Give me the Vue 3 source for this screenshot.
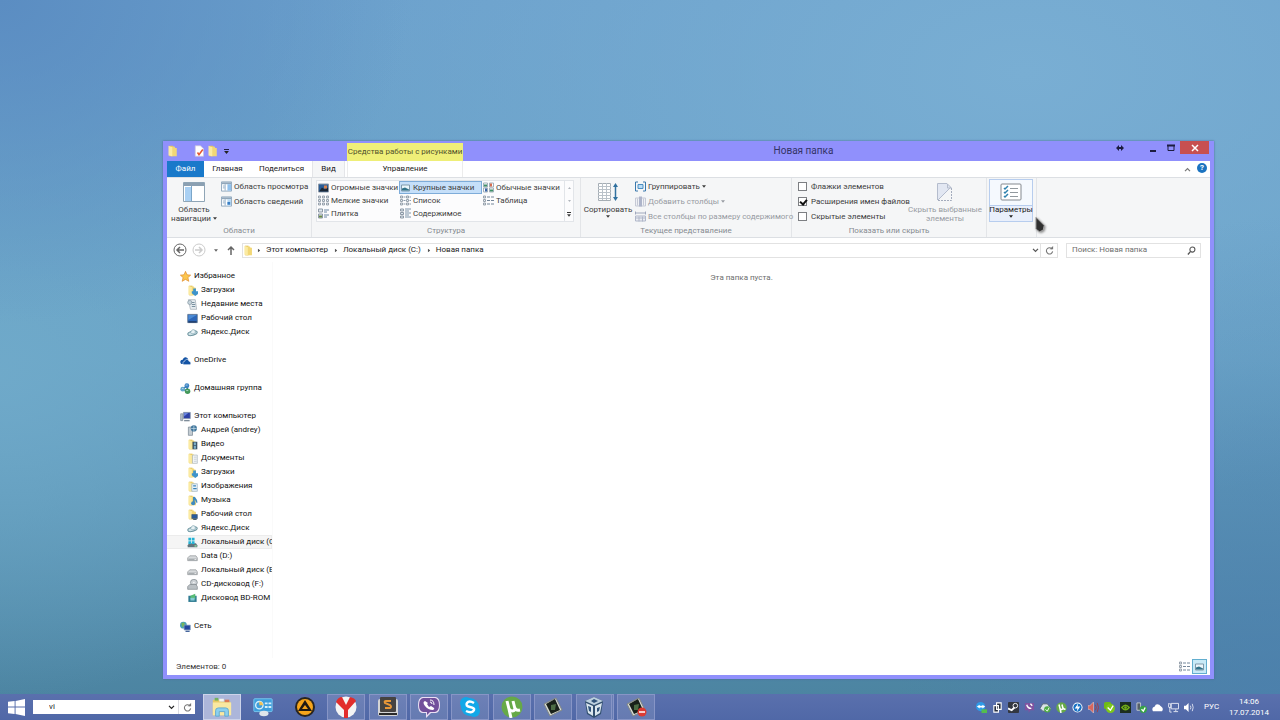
<script setup>
import { ref } from 'vue'

const views = [
  { icon: 'huge', label: 'Огромные значки' },
  { icon: 'large', label: 'Крупные значки' },
  { icon: 'medium', label: 'Обычные значки' },
  { icon: 'small', label: 'Мелкие значки' },
  { icon: 'list', label: 'Список' },
  { icon: 'table', label: 'Таблица' },
  { icon: 'tiles', label: 'Плитка' },
  { icon: 'content', label: 'Содержимое' }
]
const activeView = ref('large')

const options = ref([
  { id: 'opt-flags', label: 'Флажки элементов', on: false },
  { id: 'opt-ext', label: 'Расширения имен файлов', on: true },
  { id: 'opt-hidden', label: 'Скрытые элементы', on: false }
])

const crumbs = ['Этот компьютер', 'Локальный диск (C:)', 'Новая папка']

const tree = [
  {
    icon: 'star', label: 'Избранное', children: [
      { icon: 'f-down', label: 'Загрузки' },
      { icon: 'recent', label: 'Недавние места' },
      { icon: 'desktop', label: 'Рабочий стол' },
      { icon: 'yadisk', label: 'Яндекс.Диск' }
    ]
  },
  { icon: 'onedrive', label: 'OneDrive', children: [] },
  { icon: 'homegroup', label: 'Домашняя группа', children: [] },
  {
    icon: 'pc', label: 'Этот компьютер', children: [
      { icon: 'phone', label: 'Андрей (andrey)' },
      { icon: 'f-video', label: 'Видео' },
      { icon: 'f-doc', label: 'Документы' },
      { icon: 'f-down', label: 'Загрузки' },
      { icon: 'f-img', label: 'Изображения' },
      { icon: 'f-music', label: 'Музыка' },
      { icon: 'f-desk', label: 'Рабочий стол' },
      { icon: 'yadisk', label: 'Яндекс.Диск' },
      { icon: 'drive-c', label: 'Локальный диск (C:)', selected: true },
      { icon: 'drive', label: 'Data (D:)' },
      { icon: 'drive', label: 'Локальный диск (E:)' },
      { icon: 'cd', label: 'CD-дисковод (F:)' },
      { icon: 'bd', label: 'Дисковод BD-ROM' }
    ]
  },
  { icon: 'network', label: 'Сеть', children: [] }
]

const apps = [
  { icon: 'explorer', name: 'Проводник', state: 'active' },
  { icon: 'control', name: 'Панель управления', state: '' },
  { icon: 'aimp', name: 'AIMP', state: '' },
  { icon: 'yandex', name: 'Яндекс', state: 'open' },
  { icon: 'sublime', name: 'Sublime Text', state: 'open' },
  { icon: 'viber', name: 'Viber', state: 'open' },
  { icon: 'skype', name: 'Skype', state: 'open' },
  { icon: 'utorrent', name: 'uTorrent', state: 'open' },
  { icon: 'film', name: 'Camtasia', state: 'open' },
  { icon: 'vbox', name: 'VirtualBox', state: 'open stacked' },
  { icon: 'filmrec', name: 'Camtasia Recorder', state: 'open' }
]

const tray = ['t-team', 't-copy', 't-steam', 't-viber', 't-disk', 't-ut', 't-bolt', 't-sound', 't-green', 't-nvidia', 't-usb', 't-cloud', 't-net', 't-vol']
const query = ref('vi')
const search = ref('')
</script>

<template>
  <div class="desktop">
    <svg class="defs" aria-hidden="true">
      <symbol id="folder" viewBox="0 0 16 16"><path d="M3 1h5v14H3z" fill="#e0bd50" /><path d="M5 2h5l1 2h2v11H5z" fill="#f2d776" /><path d="M2 1l5 2v12l-5-1z" fill="#fbeaa2" /></symbol>
      <symbol id="props" viewBox="0 0 16 16"><path d="M3 1h7l4 4v10H3z" fill="#fff" stroke="#c9c3d8" /><path d="M6 10l2 3 5-7" fill="none" stroke="#e4552f" stroke-width="2" /></symbol>
      <symbol id="tri" viewBox="0 0 8 5"><path d="M0 0h8L4 5z" fill="currentColor" /></symbol>
      <symbol id="navpane" viewBox="0 0 22 20"><path d="M.5 .5h21v19H.5z" fill="#fff" stroke="#8fa5b6" /><path d="M1 1h20v3H1z" fill="#8ba0b2" /><path d="M2 5h6v14H2z" fill="#a9d0f3" /><path d="M8.500 4v15" stroke="#7ba6c9" /></symbol>
      <symbol id="preview" viewBox="0 0 12 11"><path d="M.5 .5h11v10H.5z" fill="#fff" stroke="#8aa3ba" /><path d="M1 1h10v2H1z" fill="#90a6ba" /><path d="M7 3h4v7H7z" fill="#8fc1ee" /><path d="M2 5h2M2 7h2M4.500 3v7" stroke="#8daac4" /></symbol>
      <symbol id="details" viewBox="0 0 12 11"><path d="M.5 .5h11v10H.5z" fill="#fff" stroke="#8aa3ba" /><path d="M1 1h10v2H1z" fill="#90a6ba" /><path d="M7 3h4v7H7z" fill="#b8daf5" /><path d="M7 6h3v3H7z" fill="#3a7fc4" /><path d="M2 5h2M2 7h2M4.500 3v7" stroke="#8daac4" /></symbol>
      <symbol id="huge" viewBox="0 0 11 10"><path d="M.5 1.500h10v8H.5z" fill="#2b5d96" stroke="#8c99a8" /><path d="M1 9l3-4 3 2 3-2v4z" fill="#1b2735" /><path d="M6 3h3v3H6z" fill="#d9824d" /></symbol>
      <symbol id="large" viewBox="0 0 11 10"><path d="M1.500 2.500h8v6h-8z" fill="#eaf6fb" stroke="#7f99ab" /><path d="M2 6l3-1 4 2v1H2z" fill="#317389" /></symbol>
      <symbol id="medium" viewBox="0 0 11 10"><path d="M.5 .5h4v4h-4zM6.500 .5h4v4h-4zM.5 5.500h4v4h-4zM6.500 5.500h4v4h-4z" fill="#fff" stroke="#a3b0ba" /><path d="M1 2h3v2H1zM7 7h3v2H7z" fill="#3f8f68" /><path d="M7 1h2v3H7z" fill="#d56d4e" /><path d="M2 6h2v3H2z" fill="#3b64a8" /></symbol>
      <symbol id="small" viewBox="0 0 11 10"><path d="M.5 .5h2v2h-2zM4.500 .5h2v2h-2zM8.500 .5h2v2h-2zM.5 4h2v2h-2zM4.500 4h2v2h-2zM8.500 4h2v2h-2zM.5 7.500h2v2h-2zM4.500 7.500h2v2h-2zM8.500 7.500h2v2h-2z" fill="#e8eef2" stroke="#98a2ad" /></symbol>
      <symbol id="list" viewBox="0 0 11 10"><path d="M.5 .5h2v2h-2zM6.500 .5h2v2h-2zM.5 4h2v2h-2zM6.500 4h2v2h-2zM.5 7.500h2v2h-2zM6.500 7.500h2v2h-2z" fill="#e8eef2" stroke="#98a2ad" /><path d="M3.500 1.500h2M9.500 1.500H11M3.500 5h2M9.500 5H11M3.500 8.500h2M9.500 8.500H11" stroke="#8a9aab" /></symbol>
      <symbol id="table" viewBox="0 0 11 10"><path d="M.5 .5h2v2h-2zM.5 4h2v2h-2zM.5 7.500h2v2h-2z" fill="#e8eef2" stroke="#98a2ad" /><path d="M4 1.500h3M8 1.500h3M4 5h3M8 5h3M4 8.500h3M8 8.500h3" stroke="#75879a" /></symbol>
      <symbol id="tiles" viewBox="0 0 11 10"><path d="M.5 .5h4v3h-4zM.5 5.500h4v4h-4z" fill="#dfe8ee" stroke="#8d99a6" /><path d="M1 7h3v2H1z" fill="#6a8b43" /><path d="M6 1.500h5M6 3.500h3M6 6.500h5M6 8.500h3" stroke="#6d88a4" /></symbol>
      <symbol id="content" viewBox="0 0 11 10"><path d="M.5 .5h3v2h-3zM.5 4h3v2h-3zM.5 7.500h3v2h-3z" fill="#dfe8ee" stroke="#8d99a6" /><path d="M5 .5h6M5 2.500h4M5 4.500h6M5 6.500h4M5 8.500h6" stroke="#7f95aa" /></symbol>
      <symbol id="sort" viewBox="0 0 22 20"><path d="M1.500 1.500h12v17h-12z" fill="#fff" stroke="#a5adb4" /><path d="M1 4.500h13M1 7.500h13M1 10.500h13M1 13.500h13M1 16.500h13M5.500 1v17M9.500 1v17" stroke="#bac2c9" /><path d="M18.500 3v14" stroke="#31719f" stroke-width="1.500" /><path d="M16 5l2.500-4L21 5zM16 15l2.500 4 2.500-4z" fill="#31719f" /></symbol>
      <symbol id="group" viewBox="0 0 11 10"><path d="M3 .5H.5v9H3M8 .5h2.500v9H8" fill="none" stroke="#3a79ad" /><path d="M3 3h5v4H3z" fill="#b9dcf6" stroke="#4c8fc2" /></symbol>
      <symbol id="addcol" viewBox="0 0 11 10"><path d="M.5 1.500h10v8H.5z" fill="#f0f1f5" stroke="#c5c9d5" /><path d="M4 0h3v10H4z" fill="#aeb5ca" /><path d="M2.500 2v7M8.500 2v7" stroke="#c5c9d5" /></symbol>
      <symbol id="fitcol" viewBox="0 0 11 10"><path d="M.5 0v3M10.500 0v3M1 1.500h9" stroke="#a0a8bd" /><path d="M.5 4.500h10v5H.5z" fill="#eceef4" stroke="#b0b7c9" /><path d="M1 6.500h9M4 5v5M7.500 5v5" stroke="#b0b7c9" /></symbol>
      <symbol id="hide" viewBox="0 0 18 20"><path d="M2 1.500h9l4 4L2 18z" fill="#e2e7f2" /><path d="M1.500 18V1.500h9.500l4 4" fill="none" stroke="#b4bccd" /><path d="M15.500 6v12.500h-14" fill="none" stroke="#a4acbd" stroke-dasharray="2 1" /><path d="M2 18L15 5M11.500 2v4h4" stroke="#b4bccd" fill="none" /></symbol>
      <symbol id="params" viewBox="0 0 22 18"><rect x="1" y="1" width="20" height="16" rx="1" fill="#fff" stroke="#84898f" /><path d="M4 5l1 1 3-3M4 9l1 1 3-3M4 13l1 1 3-3" fill="none" stroke="#2f82ae" stroke-width="1.500" /><path d="M10 5.500h8M10 9.500h8M10 13.500h8" stroke="#92999e" /></symbol>
      <symbol id="back" viewBox="0 0 14 14"><circle cx="7" cy="7" r="6" fill="none" stroke="currentColor" /><path d="M11 7H4M7 4L4 7l3 3" fill="none" stroke="currentColor" stroke-width="1.500" /></symbol>
      <symbol id="forward" viewBox="0 0 14 14"><circle cx="7" cy="7" r="6" fill="none" stroke="currentColor" /><path d="M3 7h7M7 4l3 3-3 3" fill="none" stroke="currentColor" stroke-width="1.500" /></symbol>
      <symbol id="up" viewBox="0 0 8 10"><path d="M4 10V2M1 5l3-3 3 3" fill="none" stroke="#666" stroke-width="1.500" /></symbol>
      <symbol id="chev" viewBox="0 0 8 6"><path d="M1 1l3 3 3-3" fill="none" stroke="currentColor" stroke-width="1.500" /></symbol>
      <symbol id="reload" viewBox="0 0 10 10"><path d="M8 3.500A3.500 3.500 0 1 0 8.500 6" fill="none" stroke="#777" stroke-width="1.200" /><path d="M5 3.500h4V0z" fill="#777" /></symbol>
      <symbol id="lens" viewBox="0 0 10 10"><circle cx="6" cy="4" r="2.800" fill="none" stroke="#555" stroke-width="1.200" /><path d="M4 6L1 9.500" stroke="#555" stroke-width="1.500" /></symbol>
      <symbol id="star" viewBox="0 0 16 16"><path d="M8 .5l2.200 5 5.300.5-4 3.600 1.300 5.400L8 12.200 3.200 15l1.300-5.400-4-3.600 5.300-.5z" fill="#fbc64f" stroke="#e08c2c" /></symbol>
      <symbol id="f-down" viewBox="0 0 16 16"><use href="#folder" /><path d="M9 5h4v4h3v4l-4 3-5-4V9h2z" fill="#3d93cb" /></symbol>
      <symbol id="f-video" viewBox="0 0 16 16"><use href="#folder" /><path d="M8 4h7v11H8z" fill="#3d566b" /><path d="M10 5h3v4h-3zM10 10h3v4h-3z" fill="#7fb0c8" /></symbol>
      <symbol id="f-doc" viewBox="0 0 16 16"><use href="#folder" /><path d="M8 3h7v12H8z" fill="#f4f6f8" stroke="#a9b4bd" /><path d="M10 6h4M10 9h4M10 12h4" stroke="#b1bcc6" /></symbol>
      <symbol id="f-img" viewBox="0 0 16 16"><use href="#folder" /><path d="M7 4h8v11H7z" fill="#e6f2fa" stroke="#9cb2c2" /><path d="M9 7h4M9 11h5" stroke="#3b83b8" stroke-width="2" /></symbol>
      <symbol id="f-music" viewBox="0 0 16 16"><use href="#folder" /><path d="M10 3c1 3 5 3 4 8M10 3v9" fill="none" stroke="#3e8ac0" stroke-width="2.500" /><ellipse cx="9" cy="12" rx="3" ry="3" fill="#3e8ac0" /></symbol>
      <symbol id="f-desk" viewBox="0 0 16 16"><use href="#folder" /><path d="M7 8h8v6H7z" fill="#275b9b" stroke="#496070" /><path d="M9 15h5" stroke="#496070" stroke-width="2" /></symbol>
      <symbol id="recent" viewBox="0 0 16 16"><path d="M2 1h10l2 14H5z" fill="#e5ebef" stroke="#9da9b2" /><path d="M6 5h5M7 8h5M7 11h5" stroke="#78909f" stroke-width="1.500" /><circle cx="4" cy="5" r="3" fill="#c6d4dc" stroke="#8798a3" /></symbol>
      <symbol id="desktop" viewBox="0 0 16 16"><path d="M1 2h14v12H1z" fill="#2c66b8" stroke="#5a6f85" /><path d="M2 3h12L2 10z" fill="#4b8ad4" /><path d="M2 12h12v2H2z" fill="#1d3862" /></symbol>
      <symbol id="yadisk" viewBox="0 0 16 16"><ellipse cx="8" cy="9" rx="7" ry="3" fill="#cfe2e7" stroke="#6d949f" stroke-width="1.500" transform="rotate(-15 8 9)" /><path d="M5 8c2-6 8-5 7 0-2 3-5 2-7 0z" fill="#e7f1f4" stroke="#7ba1ac" /></symbol>
      <symbol id="onedrive" viewBox="0 0 16 16"><path d="M1 12c-2-4 2-6 3-5 1-5 6-5 8-1l-6 4v3H2z" fill="#1454a5" /><path d="M5 14c-2-3 0-5 2-5 1-4 5-3 6 0 4 1 3 5 1 5z" fill="#1454a5" stroke="#fff" stroke-width=".8" /></symbol>
      <symbol id="homegroup" viewBox="0 0 16 16"><path d="M10 4L4 9l7 3z" fill="none" stroke="#205e8f" stroke-width="2" /><circle cx="10" cy="4" r="3.500" fill="#3b83c4" /><circle cx="4" cy="9" r="3.500" fill="#65a8cc" /><circle cx="11" cy="12" r="4" fill="#43985a" /><path d="M8 3h3M3 8h2M9 11h3" stroke="#d8eef5" /></symbol>
      <symbol id="pc" viewBox="0 0 16 16"><path d="M1 4h3v10H1z" fill="#bac4ce" stroke="#788590" /><path d="M5 2h10v9H5z" fill="#2c3fa6" stroke="#8797a8" /><path d="M6 3h6L6 8z" fill="#6985df" /><path d="M6 14h8" stroke="#7e8c99" stroke-width="2" /></symbol>
      <symbol id="phone" viewBox="0 0 16 16"><path d="M2 3h6v12H2z" fill="#c3ccd2" stroke="#75838f" /><circle cx="10" cy="5" r="4.500" fill="#42769c" /><path d="M10 1v8M6 5h8" stroke="#cde3ee" /></symbol>
      <symbol id="drive" viewBox="0 0 16 16"><path d="M1 10l3-3h9l2 3v4H1z" fill="#d7dadc" stroke="#8d9295" /><path d="M2 11h12v3H2z" fill="#a8adb0" /><path d="M11 12h2v1h-2z" fill="#fff" /></symbol>
      <symbol id="drive-c" viewBox="0 0 16 16"><path d="M1 12l2-3h10l2 3v3H1z" fill="#62757d" /><path d="M2 1h4v4H2zM7 1h4v4H7zM2 6h4v4H2zM7 6h4v4H7z" fill="#24b3d5" /><path d="M11 12h3v2h-3z" fill="#8de0a0" /></symbol>
      <symbol id="cd" viewBox="0 0 16 16"><ellipse cx="10" cy="5" rx="5" ry="4.500" fill="#ccd1d5" stroke="#7b8389" /><circle cx="10" cy="5" r="1" fill="#fff" /><path d="M1 11l3-3h9l2 3v4H1z" fill="#bac0c4" stroke="#80878c" /></symbol>
      <symbol id="bd" viewBox="0 0 16 16"><path d="M2 4h12v9H2z" fill="#2f7b92" /><path d="M5 4l7-3v8H5z" fill="#58bc75" /><path d="M5 7h6v4H5z" fill="#83c9d4" /></symbol>
      <symbol id="network" viewBox="0 0 16 16"><circle cx="5" cy="6" r="5" fill="#4aa0ba" /><path d="M2 3l4-1 1 4-4 3z" fill="#76b65c" /><path d="M6 6h9v7H6z" fill="#2346a0" stroke="#84a1bd" /><path d="M8 15h6" stroke="#45659c" stroke-width="2" /></symbol>
      <symbol id="start" viewBox="0 0 18 18"><path d="M0 3l7-1v6H0zM8 2l10-2v8H8zM0 9h7v7l-7-1zM8 9h10v9L8 16z" fill="#fff" /></symbol>
      <symbol id="explorer" viewBox="0 0 24 22"><path d="M2 3h7l2 2h10v15H2z" fill="#e8c965" /><path d="M4 1h4v3H4z" fill="#73b25d" /><path d="M9 2h5v3H9z" fill="#f4f5f0" /><path d="M15 3h5v3h-5z" fill="#dc7a57" /><path d="M2 6h20v14H2z" fill="#f9e8a1" /><path d="M5 21v-6q0-3 3-3h8q3 0 3 3v6h-4v-5H9v5z" fill="#8bd0ef" stroke="#5fa9d0" /></symbol>
      <symbol id="control" viewBox="0 0 24 22"><rect x="2" y="2" width="20" height="14" rx="1" fill="#3e9edc" stroke="#79c8ef" /><circle cx="8" cy="9" r="4" fill="none" stroke="#d7f0fc" stroke-width="1.500" /><path d="M8 9V5a4 4 0 0 1 4 4z" fill="#f0c157" /><path d="M14 6h3v2h-3zM18 6h3v2h-3zM14 10h3v2h-3zM18 10h3v2h-3z" fill="#d5f0fc" /><ellipse cx="13" cy="18" rx="5" ry="3" fill="#dfe6ea" /></symbol>
      <symbol id="aimp" viewBox="0 0 22 22"><circle cx="11" cy="11" r="10" fill="#292520" /><circle cx="11" cy="11" r="8" fill="#f6a51b" /><path d="M11 4l7 11H4zM11 9l-3 4h6z" fill="#211b14" fill-rule="evenodd" /></symbol>
      <symbol id="yandex" viewBox="0 0 22 22"><circle cx="11" cy="11" r="10.500" fill="#f4f4f4" /><path d="M1 6q2-5 6-5l4 8 4-8q5 1 6 4l-8 9v8h-4v-8z" fill="#e22d2c" /></symbol>
      <symbol id="sublime" viewBox="0 0 22 22"><rect x="1" y="3" width="20" height="17" rx="2" fill="#d4d4d4" /><rect x="3" y="1" width="16" height="15" rx="1" fill="#464341" /><path d="M2 17h18v2H2z" fill="#292929" /><path d="M14 5H9q-2 0-1 2l5 2q2 2 0 3H8" stroke="#e89738" stroke-width="2" fill="none" /></symbol>
      <symbol id="viber" viewBox="0 0 22 22"><path d="M4 1h14q4 1 4 8t-4 8h-5l-5 5v-5H4q-4-1-4-8t4-8z" fill="#e9dff2" /><path d="M5 2h12q4 1 4 7t-4 7h-5l-3 3v-3H5q-4-1-4-7t4-7z" fill="#72509c" /><path d="M7 5q-3 1 0 5t8 4q2-1 1-2l-3-2-2 1-2-3 1-1z" fill="#fff" /><path d="M12 4q4 0 4 5M12 6q2 0 2 2" fill="none" stroke="#fff" /></symbol>
      <symbol id="skype" viewBox="0 0 22 22"><circle cx="7" cy="7" r="6" fill="#12a8e8" /><circle cx="15" cy="15" r="6" fill="#12a8e8" /><circle cx="11" cy="11" r="9" fill="#12a8e8" /><path d="M15 7q-5-3-7 0t3 4 4 3q-2 4-8 1" fill="none" stroke="#fff" stroke-width="2.500" /></symbol>
      <symbol id="utorrent" viewBox="0 0 22 22"><circle cx="11" cy="11" r="10.500" fill="#66a947" /><path d="M6 5l2 8q4 4 6 0l-2-8M14 12q1 3 5 2M8 13l2 9" fill="none" stroke="#fff" stroke-width="3" /></symbol>
      <symbol id="film" viewBox="0 0 22 22"><path d="M2 8L14 2l6 12-12 6z" fill="#d9ddd8" stroke="#818781" /><path d="M4 8l9-5 5 11-9 4z" fill="#18211a" /><path d="M9 9l5-1-1 6H9z" fill="#4c6c44" /></symbol>
      <symbol id="filmrec" viewBox="0 0 22 22"><use href="#film" /><circle cx="17" cy="16" r="4.500" fill="#dc3b33" /><path d="M14 16h6" stroke="#fff" stroke-width="1.500" /></symbol>
      <symbol id="vbox" viewBox="0 0 22 22"><path d="M11 1l9 4-2 13-7 4-7-4L2 5z" fill="#314f70" /><path d="M11 1l9 4-9 4-9-4z" fill="#bcd0df" /><path d="M3 7l7 3v10l-5-3zM12 10l7-3-2 10-5 3z" fill="#dae6ee" /><path d="M5 10l3 1v5l-2-1zM14 12l3-1-1 4-2 1zM8 5l3-2 4 2-4 2z" fill="#2f527a" /></symbol>
      <symbol id="t-team" viewBox="0 0 12 12"><circle cx="5" cy="5" r="5" fill="#2e9be8" /><path d="M1 5l3-2v1h3V3l3 2-3 2V6H4v1z" fill="#fff" /><path d="M6 8h6v4H6z" fill="#54bd4d" /></symbol>
      <symbol id="t-copy" viewBox="0 0 12 12"><path d="M5 1h5v7H5zM2 4h5v7H2z" fill="#283040" stroke="#fff" stroke-width="1.200" /></symbol>
      <symbol id="t-steam" viewBox="0 0 12 12"><rect width="12" height="12" rx="1" fill="#333740" /><circle cx="8" cy="4" r="2.500" fill="none" stroke="#fff" /><path d="M0 7l4 2 3-3" stroke="#fff" stroke-width="2" fill="none" /></symbol>
      <symbol id="t-viber" viewBox="0 0 12 12"><path d="M1 1h10v8H7l-2 3V9H1z" fill="#8053a0" /><path d="M3 3q1 4 5 4M7 2l2 2" stroke="#fff" stroke-width="1.500" fill="none" /></symbol>
      <symbol id="t-disk" viewBox="0 0 12 12"><path d="M0 7l3-5h5l4 5-3 3H3z" fill="#dae3e7" stroke="#546575" /><circle cx="8" cy="8" r="3.500" fill="#4eac45" /><path d="M6 8l2 2 2-4" stroke="#fff" fill="none" /></symbol>
      <symbol id="t-ut" viewBox="0 0 12 12"><use href="#utorrent" /></symbol>
      <symbol id="t-bolt" viewBox="0 0 12 12"><circle cx="6" cy="6" r="5.500" fill="#fff" /><circle cx="6" cy="6" r="4.500" fill="#1871c4" /><path d="M7 1L3 7h3l-1 4 4-6H6z" fill="#fff" /></symbol>
      <symbol id="t-sound" viewBox="0 0 12 12"><path d="M0 4h2l4-4v12L2 8H0z" fill="#d9665c" stroke="#f0d5d0" stroke-width=".6" /><path d="M8 3q2 3 0 6M10 1q3 5 0 10" stroke="#a63d42" fill="none" /></symbol>
      <symbol id="t-green" viewBox="0 0 12 12"><rect x="0" y="0" width="8" height="8" rx="2" fill="#6eba19" /><circle cx="7" cy="7" r="5" fill="#7dc71b" /><path d="M4 6l3 3 3-5" stroke="#fff" stroke-width="1.500" fill="none" /></symbol>
      <symbol id="t-nvidia" viewBox="0 0 12 12"><path d="M0 0h12v12H0z" fill="#1c2d20" /><path d="M2 6q4-5 8 0-4 5-8 0z" fill="none" stroke="#70ac16" stroke-width="1.500" /><circle cx="6" cy="6" r="1.500" fill="#70ac16" /></symbol>
      <symbol id="t-usb" viewBox="0 0 12 12"><path d="M1 1h4v8H1z" fill="#555f68" stroke="#c6ced3" /><circle cx="8" cy="8" r="4" fill="#36a246" /><path d="M6 8l2 2 2-4" stroke="#fff" stroke-width="1.500" fill="none" /></symbol>
      <symbol id="t-cloud" viewBox="0 0 12 12"><path d="M1 10q-2-4 2-5 1-4 5-2 1 1 2 2 3 2 1 5z" fill="#fff" /></symbol>
      <symbol id="t-net" viewBox="0 0 12 12"><path d="M3.500 1.500h8v6h-8zM6 10.500h5M8.500 8v2M0 2h3v4H1zM2 6v5h2" fill="none" stroke="#e8ebf5" /></symbol>
      <symbol id="t-vol" viewBox="0 0 12 12"><path d="M0 4h2l3-3v10L2 8H0z" fill="#fff" /><path d="M7 4q1 2 0 4M9 2q2 4 0 8" fill="none" stroke="#dfe3f1" /></symbol>
      <symbol id="pointer" viewBox="0 0 12 16"><path d="M1 0l9 9-1 5-4 2-4-3z" fill="#303030" stroke="#a8a8a8" /></symbol>
    </svg>

    <main class="window">
      <header class="titlebar">
        <div class="quick">
          <svg class="i12"><use href="#folder" /></svg>
          <span class="sep"></span>
          <button aria-label="Свойства"><svg class="i12"><use href="#props" /></svg></button>
          <button aria-label="Новая папка"><svg class="i12"><use href="#folder" /></svg></button>
          <button class="more" aria-label="Настройка панели"><svg><use href="#tri" /></svg></button>
        </div>
        <div class="context">Средства работы с рисунками</div>
        <h1>Новая папка</h1>
        <div class="controls">
          <button class="move" aria-label="Переместить"><svg viewBox="0 0 8 6"><path d="M0 3l3-3v2h2V0l3 3-3 3V4H3v2z" fill="#1d1d40" /></svg></button>
          <button aria-label="Свернуть"><svg viewBox="0 0 8 8"><path d="M1 6h6v2H1z" fill="#1d1d40" /></svg></button>
          <button aria-label="Развернуть"><svg viewBox="0 0 8 8"><path d="M1 1.500h6v5H1z" fill="none" stroke="#1d1d40" /><path d="M0 1.500h8" stroke="#1d1d40" stroke-width="2" /></svg></button>
          <button class="close" aria-label="Закрыть"><svg viewBox="0 0 8 8"><path d="M1 1l6 6M7 1L1 7" stroke="#fff" stroke-width="1.500" /></svg></button>
        </div>
      </header>

      <nav class="tabs">
        <button class="file">Файл</button>
        <button class="home">Главная</button>
        <button class="share">Поделиться</button>
        <button class="view">Вид</button>
        <button class="manage">Управление</button>
        <span class="grow"></span>
        <button class="collapse" aria-label="Свернуть ленту"><svg><use href="#chev" /></svg></button>
        <button class="help" aria-label="Справка">?</button>
      </nav>

      <div class="ribbon">
        <section class="group g-panes">
          <div class="tools">
            <button class="big"><svg class="bigicon"><use href="#navpane" /></svg><span>Область<br>навигации <svg class="tri"><use href="#tri" /></svg></span></button>
            <div class="stack">
              <button class="line"><svg class="i11"><use href="#preview" /></svg>Область просмотра</button>
              <button class="line"><svg class="i11"><use href="#details" /></svg>Область сведений</button>
            </div>
          </div>
          <h2>Области</h2>
        </section>

        <section class="group g-layout">
          <div class="tools">
            <div class="gallery">
              <div class="views">
                <button v-for="v in views" :key="v.icon" :class="{ on: v.icon === activeView }" @click="activeView = v.icon">
                  <svg class="i11"><use :href="'#' + v.icon" /></svg>{{ v.label }}
                </button>
              </div>
              <div class="scroller">
                <button class="dim" aria-label="Вверх"><svg class="tri flip"><use href="#tri" /></svg></button>
                <button class="dim" aria-label="Вниз"><svg class="tri"><use href="#tri" /></svg></button>
                <button class="all" aria-label="Все виды"><svg class="tri"><use href="#tri" /></svg></button>
              </div>
            </div>
          </div>
          <h2>Структура</h2>
        </section>

        <section class="group g-current">
          <div class="tools">
            <button class="big"><svg class="bigicon"><use href="#sort" /></svg><span>Сортировать</span><svg class="tri under"><use href="#tri" /></svg></button>
            <div class="stack">
              <button class="line"><svg class="i11"><use href="#group" /></svg>Группировать <svg class="tri"><use href="#tri" /></svg></button>
              <button class="line" disabled><svg class="i11"><use href="#addcol" /></svg>Добавить столбцы <svg class="tri"><use href="#tri" /></svg></button>
              <button class="line" disabled><svg class="i11"><use href="#fitcol" /></svg>Все столбцы по размеру содержимого</button>
            </div>
          </div>
          <h2>Текущее представление</h2>
        </section>

        <section class="group g-show">
          <div class="tools">
            <div class="stack">
              <label v-for="o in options" :key="o.id" class="line" :for="o.id"><input :id="o.id" v-model="o.on" type="checkbox">{{ o.label }}</label>
            </div>
            <button class="big hide" disabled><svg class="bigicon"><use href="#hide" /></svg><span>Скрыть выбранные<br>элементы</span></button>
          </div>
          <h2>Показать или скрыть</h2>
        </section>

        <section class="group g-params">
          <button class="big params"><svg class="bigicon"><use href="#params" /></svg><span>Параметры</span><svg class="tri under"><use href="#tri" /></svg></button>
          <svg class="pointer"><use href="#pointer" /></svg>
        </section>
      </div>

      <div class="address">
        <button class="round" aria-label="Назад"><svg><use href="#back" /></svg></button>
        <button class="round off" aria-label="Вперед"><svg><use href="#forward" /></svg></button>
        <button class="hist" aria-label="Журнал"><svg class="tri"><use href="#tri" /></svg></button>
        <button class="upbtn" aria-label="Вверх"><svg><use href="#up" /></svg></button>
        <div class="path">
          <svg class="i11"><use href="#folder" /></svg>
          <template v-for="c in crumbs" :key="c"><svg class="arrow"><use href="#tri" /></svg><a href="#">{{ c }}</a></template>
          <span class="grow"></span>
          <button class="drop" aria-label="Предыдущие расположения"><svg><use href="#chev" /></svg></button>
          <button class="refresh" aria-label="Обновить"><svg><use href="#reload" /></svg></button>
        </div>
        <div class="search">
          <input v-model="search" type="text" placeholder="Поиск: Новая папка" aria-label="Поиск: Новая папка">
          <svg><use href="#lens" /></svg>
        </div>
      </div>

      <div class="body">
        <nav class="tree">
          <ul v-for="g in tree" :key="g.label">
            <li><a href="#" class="root"><svg class="i11"><use :href="'#' + g.icon" /></svg>{{ g.label }}</a></li>
            <li v-for="c in g.children" :key="c.label"><a href="#" :class="{ selected: c.selected }"><svg class="i11"><use :href="'#' + c.icon" /></svg>{{ c.label }}</a></li>
          </ul>
        </nav>
        <section class="files"><p>Эта папка пуста.</p></section>
      </div>

      <footer class="status">
        <span>Элементов: 0</span>
        <span class="grow"></span>
        <button aria-label="Таблица"><svg class="i11"><use href="#table" /></svg></button>
        <button class="on" aria-label="Крупные значки"><svg class="i11"><use href="#large" /></svg></button>
      </footer>
    </main>

    <footer class="taskbar">
      <button class="start" aria-label="Пуск"><svg><use href="#start" /></svg></button>
      <div class="quickfind">
        <input v-model="query" type="text" aria-label="Адрес">
        <button aria-label="Список"><svg class="c"><use href="#chev" /></svg></button>
        <button class="go" aria-label="Обновить"><svg class="r"><use href="#reload" /></svg></button>
      </div>
      <div class="apps">
        <button v-for="a in apps" :key="a.name" :class="a.state" :aria-label="a.name"><svg><use :href="'#' + a.icon" /></svg></button>
      </div>
      <span class="grow"></span>
      <div class="tray"><svg v-for="t in tray" :key="t"><use :href="'#' + t" /></svg></div>
      <span class="lang">РУС</span>
      <time class="clock">14:06<br>17.07.2014</time>
    </footer>
  </div>
</template>

<style>
html, body { margin: 0; background: #5089ae; }
</style>

<style scoped>
.desktop {
  position: relative;
  min-height: 100vh;
  display: flex;
  flex-direction: column;
  overflow: hidden;
  font-family: Roboto, "Open Sans", sans-serif;
  font-size: 8px;
  line-height: 10px;
  color: #222;
  background:
    radial-gradient(ellipse 32% 45% at 0 0, #5b8dc2, transparent),
    radial-gradient(ellipse 30% 45% at 0 52%, rgba(112, 170, 202, 0.9), transparent),
    radial-gradient(ellipse 30% 70% at 100% 100%, rgba(76, 126, 176, 0.7), transparent),
    radial-gradient(ellipse 60% 60% at 80% 10%, #79aed3, transparent),
    linear-gradient(#6ba0cc, #68a3c5 50%, #4a829f);
}
.defs { position: absolute; width: 0; height: 0; }
* { box-sizing: border-box; }
svg { display: block; flex: none; }
button, input { font: inherit; color: inherit; background: none; border: 0; padding: 0; margin: 0; outline: none; }
button { display: flex; align-items: center; justify-content: center; white-space: nowrap; }
a { color: inherit; text-decoration: none; white-space: nowrap; }
h1, h2, p, ul { margin: 0; padding: 0; font-weight: normal; list-style: none; }
.grow { flex: 1; }
.i12 { width: 12px; height: 12px; }
.i11 { width: 11px; height: 11px; }
.tri { width: 4px; height: 3px; }

.window {
  position: absolute;
  inset: 141px 66px 41px 163px;
  display: flex;
  flex-direction: column;
  border: 4px solid #9090fc;
  border-top: 0;
  background: #fff;
  box-shadow: 0 0 2px #4b6795;
}
.titlebar { display: flex; height: 20px; background: #9090fc; }
.quick { display: flex; align-items: center; width: 180px; gap: 2px; }
.quick .sep { width: 10px; }
.quick .more { border-top: 1px solid #222248; padding-top: 1px; margin-left: 3px; }
.quick .more svg { width: 5px; height: 3px; }
.context { width: 116px; height: 18px; align-self: flex-end; background: #efef78; color: #52522c; text-align: center; line-height: 18px; white-space: nowrap; }
h1 { flex: 1; font-size: 10px; line-height: 19px; text-align: center; color: #333366; }
.controls { position: relative; display: flex; align-items: flex-start; padding-right: 1px; }
.controls button { width: 18px; height: 13px; }
.controls svg { width: 8px; height: 8px; }
.controls .close { width: 29px; background: #c75050; }
.controls .move { position: absolute; right: 81px; }
.controls .move svg { height: 6px; }

.tabs { display: flex; height: 16px; background: #fff; }
.tabs button { height: 16px; }
.tabs .file { width: 37px; background: #1979ca; color: #fff; }
.tabs .home { width: 47px; }
.tabs .share { width: 61px; }
.tabs .view { width: 33px; background: #f5f6f7; border: 1px solid #e4e5e8; border-width: 0 1px; }
.tabs .manage { width: 116px; margin-left: 2px; border: 1px solid #ececec; border-width: 0 1px; }
.tabs .collapse { width: 16px; color: #777; }
.tabs .collapse svg { width: 7px; height: 5px; transform: rotate(180deg); }
.tabs .help { width: 10px; height: 10px; margin: 2px 3px 0 2px; border-radius: 50%; background: #1b73c0; color: #fff; font-weight: bold; }

.ribbon { display: flex; height: 61px; background: #f5f6f7; border: 1px solid #dcdfe3; border-width: 1px 0; color: #3c3c3c; }
.group { position: relative; display: flex; flex-direction: column; border-right: 1px solid #e3e5e8; }
.group h2 { font-size: 8px; line-height: 10px; text-align: center; color: #858a90; }
.tools { display: flex; height: 48px; padding-top: 1px; }
.g-panes { width: 145px; }
.g-layout { width: 269px; }
.g-current { width: 211px; }
.g-show { width: 195px; }
.g-params { width: 50px; }
.stack { display: flex; flex: none; flex-direction: column; }
.line { display: flex; align-items: center; justify-content: flex-start; height: 15px; gap: 2px; white-space: nowrap; }
.line[disabled], .big[disabled] { color: #979ba2; }
.big { flex: none; flex-direction: column; justify-content: flex-start; line-height: 9px; width: 54px; padding-top: 3px; }
.big .bigicon { width: 22px; height: 20px; margin-bottom: 3px; }
.big span .tri { display: inline-block; vertical-align: 1px; }
.under { margin-top: 1px; }
.g-show .stack { padding-left: 6px; width: 116px; }
.g-show .line { gap: 4px; }
.line input { flex: none; appearance: none; width: 9px; height: 9px; border: 1px solid #7d7f83; background: #fff; position: relative; }
.line input:checked::after { content: ""; position: absolute; left: 2px; top: 0; width: 3px; height: 5px; border: solid #111; border-width: 0 2px 2px 0; transform: rotate(40deg); }
.hide { width: 74px; }
.gallery { display: flex; height: 42px; margin: 1px 0 0 4px; background: #fcfcfd; border: 1px solid #e2e5e9; }
.views { display: grid; grid-template-columns: 82px 83px 82px; grid-auto-rows: 13px; }
.views button { justify-content: flex-start; gap: 2px; border: 1px solid transparent; }
.views .on { background: #c5dff9; border-color: #7eacd9; }
.scroller { width: 9px; border-left: 1px solid #e2e5e9; display: flex; flex-direction: column; }
.scroller button { flex: 1; }
.scroller .dim { color: #b0b5bb; }
.scroller .dim svg { width: 3px; height: 2px; }
.scroller .all svg { border-top: 1px solid #333; height: 5px; padding-top: 1px; }
.flip { transform: rotate(180deg); }
.params { width: 44px; height: 43px; margin: 1px 0 0 2px; padding-top: 2px; border: 1px solid #b7cdee; background: linear-gradient(#f5f9fe 25px, #b7cdee 25px, #b7cdee 26px, #e9effb 26px); color: #222; }
.pointer { position: absolute; left: 48px; top: 39px; width: 11px; height: 15px; z-index: 2; filter: drop-shadow(1px 1px 1px #888); }

.address { display: flex; align-items: center; height: 24px; padding: 0 9px 0 6px; }
.round { width: 14px; margin-right: 5px; color: #666; }
.round svg { width: 14px; height: 14px; }
.round.off { color: #ccc; }
.hist { width: 10px; color: #666; }
.upbtn { width: 8px; margin: 0 7px 0 6px; }
.upbtn svg { width: 8px; height: 10px; }
.path { flex: 1; display: flex; align-items: center; height: 15px; border: 1px solid #e2e2e2; }
.arrow { width: 4px; height: 3px; margin: 0 5px 0 6px; transform: rotate(-90deg); color: #555; }
.path .i11 + .arrow { margin-left: 3px; }
.path .drop { width: 10px; color: #555; }
.path .drop svg { width: 7px; height: 5px; }
.refresh { width: 17px; height: 13px; border-left: 1px solid #e2e2e2; }
.refresh svg { width: 9px; height: 9px; }
.search { display: flex; align-items: center; width: 135px; height: 15px; margin-left: 8px; padding: 0 4px 0 5px; border: 1px solid #e2e2e2; }
.search input { flex: 1; width: 0; }
.search input::placeholder { color: #6d6d6d; opacity: 1; }
.search svg { width: 9px; height: 9px; }

.body { display: flex; flex: 1; min-height: 0; }
.tree { width: 106px; padding-top: 7px; overflow: hidden; border-right: 1px solid #fafafa; color: #111; }
.tree ul { margin-bottom: 14px; }
.tree a { display: flex; align-items: center; gap: 3px; height: 14px; padding-left: 20px; }
.tree a.root { padding-left: 13px; }
.tree a.selected { background: #f5f5f5; border: 1px solid #ececec; border-left: 0; }
.files { flex: 1; padding: 11px 0 0; text-align: center; color: #6d6d6d; }
.status { display: flex; align-items: center; height: 17px; padding: 0 3px 0 9px; color: #333; }
.status button { width: 15px; height: 15px; }
.status .on { background: #c8eaf7; border: 1px solid #62aecf; }

.taskbar { display: flex; align-items: center; height: 26px; margin-top: auto; background: linear-gradient(#5a70ad, #5068a7); color: #fff; }
.start { width: 33px; }
.start svg { width: 17px; height: 17px; }
.quickfind { display: flex; align-items: center; width: 162px; height: 14px; margin-right: 8px; background: #fff; color: #222; }
.quickfind input { flex: 1; width: 0; padding-left: 16px; }
.quickfind button { width: 14px; }
.quickfind .go { width: 17px; height: 14px; border-left: 1px solid #dcdce2; }
.quickfind .c { width: 7px; height: 5px; }
.quickfind .r { width: 9px; height: 9px; }
.apps { display: flex; justify-content: space-between; width: 452px; }
.apps button { width: 38px; height: 26px; }
.apps svg { width: 22px; height: 22px; }
.apps .open { background: rgba(255, 255, 255, 0.12); border: 1px solid #8795c6; }
.apps .stacked { border-right: 3px double #8795c6; }
.apps .active { background: #acb6da; border: 1px solid #ccd3ea; }
.tray { display: flex; gap: 5px; }
.tray svg { width: 11px; height: 11px; }
.lang { width: 33px; text-align: center; }
.clock { width: 42px; margin-right: 10px; text-align: center; line-height: 11px; }
</style>
